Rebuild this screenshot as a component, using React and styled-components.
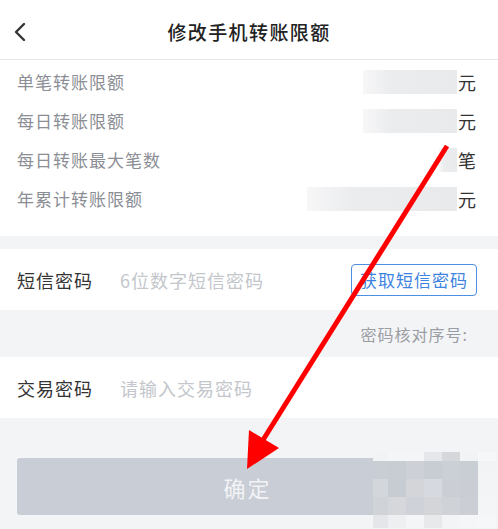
import React from "react";
import styled, { createGlobalStyle } from "styled-components";

const limitList = [
  { id: "1", label: "单笔转账限额", unit: "元", mask: 94 },
  { id: "2", label: "每日转账限额", unit: "元", mask: 94 },
  { id: "3", label: "每日转账最大笔数", unit: "笔", mask: 18 },
  { id: "4", label: "年累计转账限额", unit: "元", mask: 150 },
];

// 马赛克块 (右下角打码)
const mosaicCols = [15, 18, 18, 18, 18, 18, 18];
const mosaicRows = [9, 18, 18, 18, 13];
const mosaicColors = [
  ["#f2f3f5", "#f4f5f7", "#f4f5f7", "#e6e7ea", "#d5d7db", "#f2f3f5", "#f6f7f8"],
  ["#c9ced5", "#c8ccd3", "#cdd1d7", "#c8ccd3", "#cbcfd6", "#c9cdd4", "#f2f3f5"],
  ["#d3d6db", "#c7cbd2", "#d4d5d9", "#d6d9df", "#cbcfd5", "#cacdd4", "#f3f4f6"],
  ["#d0d3d8", "#d5d7db", "#cfd2d8", "#d3d5d9", "#cfd2d7", "#cbcfd5", "#f4f5f7"],
  ["#e5e6e9", "#eeeff1", "#f4f5f7", "#e8e9eb", "#f3f4f6", "#f5f6f7", "#f6f7f8"],
];

const App = () => {
  return (
    <>
      <GlobalStyle />
      <Page>
        <Header>
          <Back>
            <svg width="14" height="20" viewBox="0 0 14 20">
              <path
                d="M11 2 L3 10 L11 18"
                fill="none"
                stroke="#333"
                strokeWidth="2.4"
                strokeLinecap="round"
                strokeLinejoin="round"
              />
            </svg>
          </Back>
          <Title>修改手机转账限额</Title>
        </Header>

        <LimitSection>
          {limitList.map((item) => (
            <LimitRow key={item.id}>
              <LimitLabel>{item.label}</LimitLabel>
              <LimitValue>
                <Mask width={item.mask} />
                <Unit>{item.unit}</Unit>
              </LimitValue>
            </LimitRow>
          ))}
        </LimitSection>

        <FormRow first>
          <FormLabel>短信密码</FormLabel>
          <Placeholder>6位数字短信密码</Placeholder>
          <SmsButton>获取短信密码</SmsButton>
        </FormRow>

        <HintRow>密码核对序号:</HintRow>

        <FormRow>
          <FormLabel>交易密码</FormLabel>
          <Placeholder>请输入交易密码</Placeholder>
        </FormRow>

        <Footer>
          <Confirm>确定</Confirm>
          <Mosaic>
            {mosaicColors.map((row, r) =>
              row.map((c, i) => <MosaicCell key={r + "-" + i} color={c} />)
            )}
          </Mosaic>
        </Footer>

        <Arrow width="498" height="529" viewBox="0 0 498 529">
          <line x1="447" y1="146" x2="263" y2="440" stroke="#ff0000" strokeWidth="5" />
          <polygon points="249,430 279,448 247,469" fill="#ff0000" />
        </Arrow>
      </Page>
    </>
  );
};

const GlobalStyle = createGlobalStyle`
  body {
    margin: 0;
    background: #f3f4f6;
    font-family: "Noto Sans CJK SC", "Noto Sans", sans-serif;
  }
`;

const Page = styled.div`
  position: relative;
  width: 498px;
  height: 529px;
  overflow: hidden;
  background: #f3f4f6;
`;

const Header = styled.div`
  height: 59px;
  display: flex;
  align-items: center;
  justify-content: center;
  position: relative;
  background: #fff;
  border-bottom: 1px solid #e6e7ea;
`;

const Back = styled.div`
  position: absolute;
  left: 13px;
  top: 22px;
  display: flex;
`;

const Title = styled.div`
  font-size: 19px;
  font-weight: 500;
  letter-spacing: 1.4px;
  color: #222;
  margin-top: 4px;
`;

const LimitSection = styled.div`
  background: #fff;
  padding: 2px 22px 18px 17px;
`;

const LimitRow = styled.div`
  height: 39px;
  display: flex;
  align-items: center;
  justify-content: space-between;
`;

const LimitLabel = styled.div`
  font-size: 17px;
  letter-spacing: 1px;
  color: #8b8e94;
`;

const LimitValue = styled.div`
  display: flex;
  align-items: center;
`;

const Mask = styled.div`
  width: ${(p) => p.width}px;
  height: 24px;
  background: linear-gradient(to right, #f7f7f8, #ebecee 30%, #e9eaec);
`;

const Unit = styled.div`
  font-size: 18px;
  color: #333;
  margin-left: 1px;
`;

const FormRow = styled.div`
  height: 61px;
  margin-top: ${(p) => (p.first ? "13px" : "0")};
  padding: 0 21px 0 17px;
  display: flex;
  align-items: center;
  background: #fff;
`;

const FormLabel = styled.div`
  width: 103px;
  font-size: 18px;
  letter-spacing: 1px;
  color: #333;
`;

const Placeholder = styled.div`
  flex: 1;
  font-size: 18px;
  letter-spacing: 1px;
  color: #c3c6cb;
`;

const SmsButton = styled.div`
  height: 30px;
  padding: 0 8px;
  display: flex;
  align-items: center;
  border: 1px solid #4f8fe2;
  border-radius: 4px;
  font-size: 17px;
  letter-spacing: 1px;
  color: #3e84de;
`;

const HintRow = styled.div`
  height: 47px;
  padding-right: 30px;
  display: flex;
  align-items: center;
  justify-content: flex-end;
  font-size: 16px;
  letter-spacing: 1px;
  color: #9a9da3;
`;

const Footer = styled.div`
  position: relative;
  padding: 40px 20px 0 17px;
`;

const Confirm = styled.div`
  height: 57px;
  display: flex;
  align-items: center;
  justify-content: center;
  background: #c9cdd5;
  border-radius: 3px;
  font-size: 22px;
  letter-spacing: 2px;
  color: #f2f3f5;
`;

const Mosaic = styled.div`
  position: absolute;
  left: 373px;
  top: 34px;
  display: grid;
  grid-template-columns: ${mosaicCols.map((w) => w + "px").join(" ")};
  grid-template-rows: ${mosaicRows.map((h) => h + "px").join(" ")};
`;

const MosaicCell = styled.div`
  background: ${(p) => p.color};
`;

const Arrow = styled.svg`
  position: absolute;
  left: 0;
  top: 0;
  pointer-events: none;
`;

export default App;
